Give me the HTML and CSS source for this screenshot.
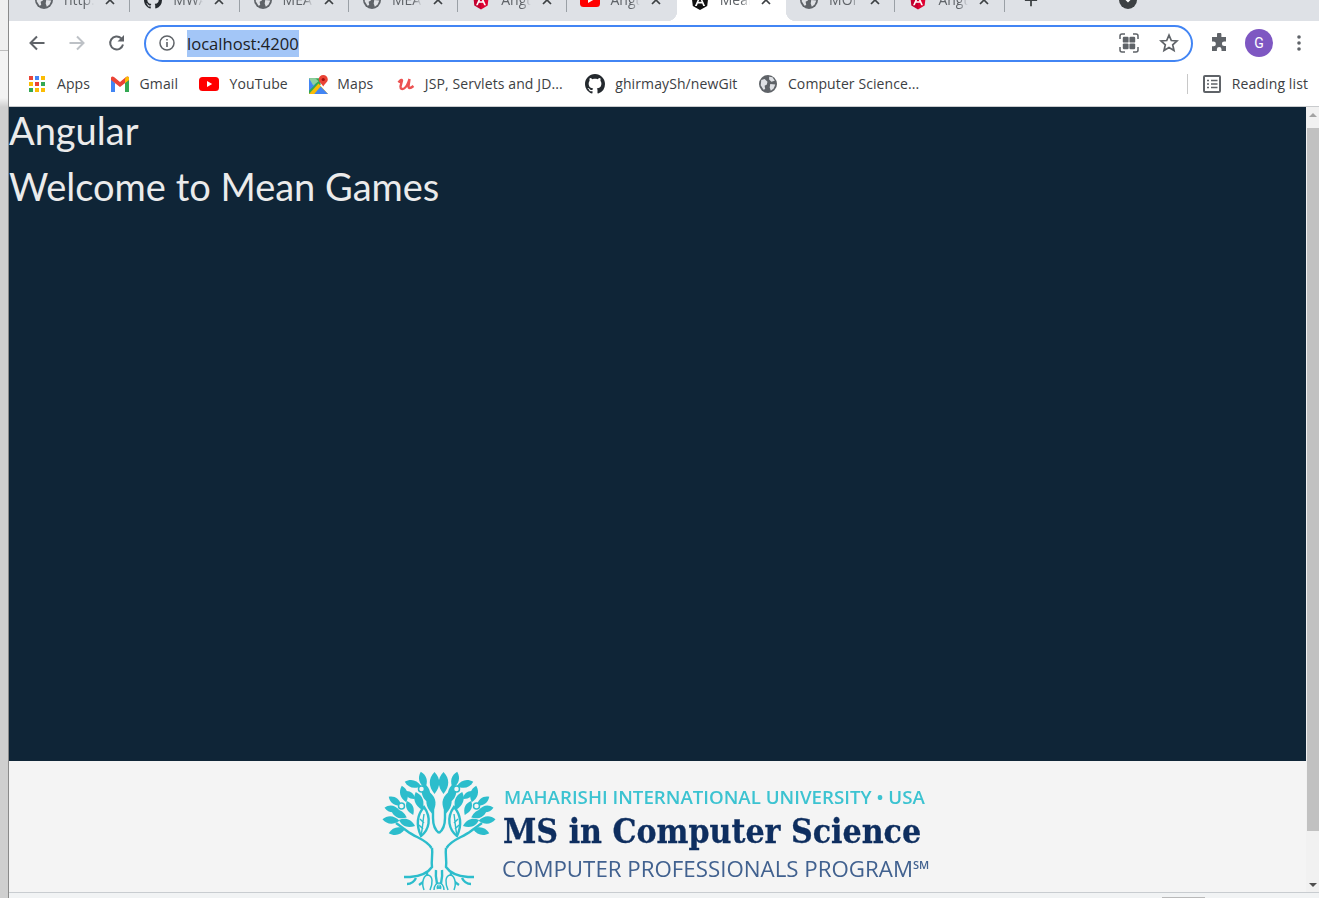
FILE: index.html
```html
<!DOCTYPE html>
<html lang="en">
<head>
<meta charset="utf-8">
<title>Mean Games</title>
<link rel="stylesheet" href="styles.css">
</head>
<body>
<svg class="defs" width="0" height="0" aria-hidden="true">
  <defs>
    <symbol id="globe" viewBox="0 0 16 16">
      <circle cx="8" cy="8" r="8" fill="#5f6368"/>
      <path d="M2 4.500 5 3.500 7.500 6 7 8.500 5 9.500 5.500 12.500 4 13 1.500 9ZM9 1.500 12 2 14 5 11 6 9 4ZM10 8 14.500 8.500 13 12 10.500 14 9.500 11Z" fill="#dfe1e5"/>
    </symbol>
    <symbol id="github" viewBox="0 0 16 16">
      <path fill="#24292e" d="M8 0C3.58 0 0 3.58 0 8c0 3.54 2.29 6.53 5.47 7.59.4.07.55-.17.55-.38 0-.19-.01-.82-.01-1.49-2.01.37-2.53-.49-2.69-.94-.09-.23-.48-.94-.82-1.13-.28-.15-.68-.52-.01-.53.63-.01 1.08.58 1.23.82.72 1.21 1.87.87 2.33.66.07-.52.28-.87.51-1.07-1.78-.2-3.64-.89-3.64-3.95 0-.87.31-1.59.82-2.15-.08-.2-.36-1.02.08-2.12 0 0 .67-.21 2.2.82.64-.18 1.32-.27 2-.27.68 0 1.36.09 2 .27 1.53-1.04 2.2-.82 2.2-.82.44 1.1.16 1.92.08 2.12.51.56.82 1.27.82 2.15 0 3.07-1.87 3.75-3.65 3.95.29.25.54.73.54 1.48 0 1.07-.01 1.93-.01 2.2 0 .21.15.46.55.38A8.013 8.013 0 0016 8c0-4.42-3.58-8-8-8z"/>
    </symbol>
    <symbol id="angular" viewBox="0 0 16 17">
      <path fill="#dd0031" d="M8 0 15.500 2.700 14.300 12.800 8 16.500Z"/>
      <path fill="#c3002f" d="M8 0 .5 2.700 1.700 12.800 8 16.500Z"/>
      <path fill="#fff" d="M8 2 3.300 12.500H5l1-2.400h4l1 2.400h1.700ZM8 5.800 9.400 8.800H6.600Z"/>
    </symbol>
    <symbol id="angular-dark" viewBox="0 0 18 18">
      <path fill="#111" d="M9 0 17.500 3 16.200 14 9 18 1.800 14 .5 3Z"/>
      <path fill="#fff" d="M9 2.500 3.900 14H5.800l1-2.600h4.400l1 2.600h1.900ZM9 6.500 10.600 9.800H7.400Z"/>
    </symbol>
    <symbol id="youtube" viewBox="0 0 20 14">
      <rect width="20" height="14" rx="3.500" fill="#f00"/>
      <path d="M8 4 13.200 7 8 10Z" fill="#fff"/>
    </symbol>
    <symbol id="close" viewBox="0 0 10 10">
      <path d="M1 1 9 9M9 1 1 9" stroke="#3c4043" stroke-width="1.700" fill="none"/>
    </symbol>
    <path id="lf" d="M0-9.500C5.500-4 5.500 3 0 9.500C-5.500 3-5.500-4 0-9.500Z"/>
  </defs>
</svg>

<div class="desktop">
  <div class="edge"></div>
  <div class="browser">

    <div class="tab-strip">
      <div class="tab-row">
        <div class="tab sep"><svg class="tab-icon"><use href="#globe"/></svg><span class="tab-title">http:</span><svg class="tab-close"><use href="#close"/></svg></div>
        <div class="tab sep"><svg class="tab-icon"><use href="#github"/></svg><span class="tab-title">MWA</span><svg class="tab-close"><use href="#close"/></svg></div>
        <div class="tab sep"><svg class="tab-icon"><use href="#globe"/></svg><span class="tab-title">MEA</span><svg class="tab-close"><use href="#close"/></svg></div>
        <div class="tab sep"><svg class="tab-icon"><use href="#globe"/></svg><span class="tab-title">MEA</span><svg class="tab-close"><use href="#close"/></svg></div>
        <div class="tab sep"><svg class="tab-icon angular-icon"><use href="#angular"/></svg><span class="tab-title">Angu</span><svg class="tab-close"><use href="#close"/></svg></div>
        <div class="tab"><svg class="tab-icon yt-icon"><use href="#youtube"/></svg><span class="tab-title">Angu</span><svg class="tab-close"><use href="#close"/></svg></div>
        <div class="tab active"><svg class="tab-icon angular-icon"><use href="#angular-dark"/></svg><span class="tab-title">Mean</span><svg class="tab-close"><use href="#close"/></svg></div>
        <div class="tab sep"><svg class="tab-icon"><use href="#globe"/></svg><span class="tab-title">MOI</span><svg class="tab-close"><use href="#close"/></svg></div>
        <div class="tab sep"><svg class="tab-icon angular-icon"><use href="#angular"/></svg><span class="tab-title">Angu</span><svg class="tab-close"><use href="#close"/></svg></div>
        <svg class="new-tab" viewBox="0 0 16 16"><path d="M8 1V15M1 8H15" stroke="#3c4043" stroke-width="2" fill="none"/></svg>
        <svg class="tab-search" viewBox="0 0 18 18"><circle cx="9" cy="9" r="9" fill="#3c4043"/><path d="M5 7.500 9 11.500 13 7.500Z" fill="#fff"/></svg>
      </div>
    </div>

    <div class="toolbar">
      <svg class="nav-icon" viewBox="0 0 20 20"><path d="M17.500 10H3.500M10 3.500 3.500 10 10 16.500" stroke="#5f6368" stroke-width="2" fill="none"/></svg>
      <svg class="nav-icon" viewBox="0 0 20 20"><path d="M2.500 10H16.500M10 3.500 16.500 10 10 16.500" stroke="#bdc1c6" stroke-width="2" fill="none"/></svg>
      <svg class="nav-icon" viewBox="0 0 20 20"><path d="M16 11.500A6.500 6.500 0 1 1 14.200 5.300" stroke="#5f6368" stroke-width="2" fill="none"/><path d="M17 2V8.500H10.500Z" fill="#5f6368"/></svg>
      <div class="omnibox">
        <svg class="info-icon" viewBox="0 0 16 16"><circle cx="8" cy="8" r="7" stroke="#5f6368" stroke-width="1.500" fill="none"/><path d="M8 7V12M8 4V5.600" stroke="#5f6368" stroke-width="1.600"/></svg>
        <span class="url">localhost:4200</span>
        <svg class="omni-icon qr-icon" viewBox="0 0 20 20"><path d="M1 6V3Q1 1 3 1H6M14 1H17Q19 1 19 3V6M19 14V17Q19 19 17 19H14M6 19H3Q1 19 1 17V14" stroke="#5f6368" stroke-width="1.500" fill="none"/><rect x="3.800" y="3.800" width="5.800" height="5.800" rx="1.200" fill="#5f6368"/><rect x="10.400" y="3.800" width="5.800" height="5.800" rx="1.200" fill="#5f6368"/><rect x="3.800" y="10.400" width="5.800" height="5.800" rx="1.200" fill="#5f6368"/><rect x="10.400" y="10.400" width="5.800" height="5.800" rx="1.200" fill="#5f6368"/></svg>
        <svg class="omni-icon" viewBox="0 0 20 20"><path d="M10 2.200 12.300 7.500 18 8 13.700 11.800 15 17.500 10 14.500 5 17.500 6.300 11.800 2 8 7.700 7.500Z" stroke="#5f6368" stroke-width="1.700" fill="none"/></svg>
      </div>
      <svg class="puzzle" viewBox="0 0 20 20"><path fill="#5f6368" d="M8 1.500a2.200 2.200 0 0 1 4.400 0V4H17v4.500h-1.800a2.300 2.300 0 0 0 0 4.600H17V18H12.500v-1.800a2.300 2.300 0 0 0-4.600 0V18H3v-4.700h1.500a2.400 2.400 0 0 0 0-4.800H3V4H8Z"/></svg>
      <div class="avatar">G</div>
      <svg class="menu" viewBox="0 0 4 16"><circle cx="2" cy="2" r="1.800" fill="#5f6368"/><circle cx="2" cy="8" r="1.800" fill="#5f6368"/><circle cx="2" cy="14" r="1.800" fill="#5f6368"/></svg>
    </div>

    <div class="bookmarks">
      <div class="bookmark">
        <svg class="bm-icon" viewBox="0 0 16 16"><g><rect x="0" y="0" width="4" height="4" fill="#ea4335"/><rect x="6" y="0" width="4" height="4" fill="#4285f4"/><rect x="12" y="0" width="4" height="4" fill="#fbbc04"/><rect x="0" y="6" width="4" height="4" fill="#fbbc04"/><rect x="6" y="6" width="4" height="4" fill="#ea4335"/><rect x="12" y="6" width="4" height="4" fill="#34a853"/><rect x="0" y="12" width="4" height="4" fill="#34a853"/><rect x="6" y="12" width="4" height="4" fill="#fbbc04"/><rect x="12" y="12" width="4" height="4" fill="#fbbc04"/></g></svg>
        <span>Apps</span>
      </div>
      <div class="bookmark">
        <svg class="bm-icon" viewBox="0 0 18 16"><path d="M0 3V16H4V7Z" fill="#4285f4"/><path d="M18 3V16H14V7Z" fill="#34a853"/><path d="M0 1.500Q1 0 3 1L9 6 15 1Q17 0 18 1.500V4L9 11 0 4Z" fill="#ea4335"/><path d="M14 3 15 1Q17 0 18 1.500V4L14 7Z" fill="#fbbc04"/></svg>
        <span>Gmail</span>
      </div>
      <div class="bookmark">
        <svg class="bm-icon bm-wide" viewBox="0 0 20 14"><use href="#youtube"/></svg>
        <span>YouTube</span>
      </div>
      <div class="bookmark">
        <svg class="bm-icon bm-maps" viewBox="0 0 18 18"><path d="M0 3 11 3 11 9 5 18H0Z" fill="#34a853"/><path d="M0 18 9 8 18 18Z" fill="#fbbc04"/><path d="M5 18 11 11 18 18Z" fill="#4285f4"/><path d="M0 3 6 9 0 15Z" fill="#4285f4"/><path d="M0 3H6L9 6 4 10Z" fill="#8fd0a0"/><path d="M13.500 0A4.300 4.300 0 0 1 17.800 4.300C17.800 7 14.500 8.500 13.500 11 12.500 8.500 9.200 7 9.200 4.300A4.300 4.300 0 0 1 13.500 0Z" fill="#ea4335"/><circle cx="13.500" cy="4.300" r="1.500" fill="#a50e0e"/></svg>
        <span>Maps</span>
      </div>
      <div class="bookmark">
        <svg class="bm-icon bm-u" viewBox="0 0 18 16"><path d="M1.500 6.500Q4.500 2.500 5 4.500L3.500 10.500Q3.500 14 7 12.500 10 11 12.500 3L11.500 10Q11.500 14 16.500 10" stroke="#ec5252" stroke-width="2.400" fill="none"/></svg>
        <span>JSP, Servlets and JD...</span>
      </div>
      <div class="bookmark">
        <svg class="bm-icon bm-gh"><use href="#github"/></svg>
        <span>ghirmaySh/newGit</span>
      </div>
      <div class="bookmark">
        <svg class="bm-icon bm-globe"><use href="#globe"/></svg>
        <span>Computer Science...</span>
      </div>
      <div class="bm-spacer"></div>
      <div class="bm-divider"></div>
      <div class="bookmark bm-reading">
        <svg class="bm-icon bm-list" viewBox="0 0 18 18"><rect x="1" y="1" width="16" height="16" rx="1" stroke="#5f6368" stroke-width="2" fill="none"/><path d="M4 5.500H6M8 5.500H14.500M4 9H6M8 9H14.500M4 12.500H6M8 12.500H14.500" stroke="#5f6368" stroke-width="1.500"/></svg>
        <span>Reading list</span>
      </div>
    </div>

    <div class="page">
      <div class="content">
        <main class="hero">
          <h1 class="heading">Angular</h1>
          <h1 class="heading">Welcome to Mean Games</h1>
        </main>
        <footer class="footer">
          <div class="logo">
            <svg class="tree" viewBox="0 0 120 122">
              <defs>
                <g id="half">
                  <g fill="#2cbdcc">
                    <use href="#lf" transform="translate(54.500 13) scale(1.150)"/>
                    <use href="#lf" transform="translate(46 23) rotate(-10)"/>
                    <use href="#lf" transform="translate(51 33) rotate(-5) scale(1.100)"/>
                    <use href="#lf" transform="translate(39 31) rotate(-20)"/>
                    <use href="#lf" transform="translate(33 14) rotate(-75) scale(.9)"/>
                    <use href="#lf" transform="translate(43 10) rotate(-15) scale(.9)"/>
                    <use href="#lf" transform="translate(30 25) rotate(-55) scale(.7)"/>
                    <use href="#lf" transform="translate(24 24) rotate(-15) scale(.9)"/>
                    <use href="#lf" transform="translate(15 31) rotate(-55) scale(.8)"/>
                    <use href="#lf" transform="translate(12 39) rotate(-80) scale(.8)"/>
                    <use href="#lf" transform="translate(11 50) rotate(-85) scale(.9)"/>
                    <use href="#lf" transform="translate(19 44) rotate(-65) scale(.9)"/>
                    <use href="#lf" transform="translate(17 61) rotate(-105) scale(.9)"/>
                    <use href="#lf" transform="translate(27 53) rotate(-70) scale(.9)"/>
                    <use href="#lf" transform="translate(30 38) rotate(-25) scale(.8)"/>
                  </g>
                  <g fill="none" stroke="#2cbdcc" stroke-width="2.400">
                    <path d="M44 37C37 45 36 55 41 66C49 60 52 48 44 37Z"/>
                    <path d="M44 44C43 50 43 56 41 66M40 49 44 53M39 55 43 59" stroke-width="1.400"/>
                    <path d="M59 63C55 60 53 55 53 48V38"/>
                    <path d="M51.500 78C46 69 36 68 27 61L16 53"/>
                    <path d="M52 78C53 85 51 90 52 97C48 103 42 106 30 107L24 107"/>
                    <path d="M47 102C48 108 44 112 39 115M36 108C34 112 30 114 27 114"/>
                    <path d="M56 100C55 108 57 112 58 119"/>
                  </g>
                  <g fill="#f4f4f4" stroke="#2cbdcc" stroke-width="1.500">
                    <circle cx="41.500" cy="19" r="3"/>
                    <circle cx="21.500" cy="36" r="3"/>
                    <path d="M44 120C41 112 44 105 48 105C53 106 53 113 50 120"/>
                    <path d="M54 120C54 115 57 113 59 113"/>
                  </g>
                </g>
              </defs>
              <use href="#half"/>
              <use href="#half" transform="translate(118) scale(-1 1)"/>
            </svg>
            <div class="logo-text">
              <div class="logo-top">MAHARISHI INTERNATIONAL UNIVERSITY • USA</div>
              <div class="logo-main">MS in Computer Science</div>
              <div class="logo-bottom">COMPUTER PROFESSIONALS PROGRAM<sup class="logo-sm">SM</sup></div>
            </div>
          </div>
        </footer>
      </div>
      <div class="scrollbar">
        <div class="arrow-up"></div>
        <div class="thumb"></div>
        <div class="track"></div>
        <div class="arrow-down"></div>
      </div>
    </div>

    <div class="status-bar"><div class="status-handle"></div></div>
  </div>
</div>
</body>
</html>
```
FILE: styles.css
```css
* { box-sizing: border-box; }
html, body { margin: 0; height: 100%; overflow: hidden; }
body { font-family: "Open Sans", "Noto Sans", sans-serif; color: #3c4043; }
.defs { position: absolute; }

.desktop { display: flex; width: 1319px; height: 898px; }
.edge {
  width: 9px; flex: none;
  border-right: 1px solid #8a8a8a;
  background: linear-gradient(#efefef 0, #efefef 50px, #bdbdbd 50px, #bdbdbd 51px, #f3f3f3 51px, #f3f3f3 98px, #cfcfcf 107px, #cfcfcf 100%);
}
.browser { flex: 1; min-width: 0; display: flex; flex-direction: column; }

/* tab strip, cropped at the top of the screenshot */
.tab-strip { height: 21px; flex: none; background: #dee1e6; overflow: hidden; }
.tab-row { display: flex; height: 42px; margin-top: -21px; padding-left: 12px; }
.tab { position: relative; flex: none; width: 109.3px; height: 42px; display: flex; align-items: center; padding: 0 14px; }
.sep::after { content: ""; position: absolute; right: 0; top: 21px; width: 1px; height: 12px; background: #9aa0a6; }
.active { background: #fff; }
.active::before, .active::after { content: ""; position: absolute; top: 32px; width: 10px; height: 10px; }
.active::before { left: -10px; background: radial-gradient(circle at 0 0, #dee1e6 10px, #fff 10.5px); }
.active::after { right: -10px; background: radial-gradient(circle at 100% 0, #dee1e6 10px, #fff 10.5px); }
.tab-icon { width: 18px; height: 18px; flex: none; }
.angular-icon { margin-top: 2px; }
.yt-icon { height: 14px; width: 20px; margin-top: -1px; margin-left: -1px; margin-right: -1px; }
.tab-title {
  width: 30px; margin-left: 11px; flex: none; overflow: hidden; white-space: nowrap;
  font-size: 14px; line-height: 18px; color: #5f6368;
  -webkit-mask-image: linear-gradient(90deg, #000 70%, transparent);
  mask-image: linear-gradient(90deg, #000 70%, transparent);
}
.tab-close { width: 10px; height: 10px; flex: none; margin-left: 11px; }
.new-tab { width: 14px; height: 14px; flex: none; margin: auto 0 auto 19px; }
.tab-search { width: 18px; height: 18px; flex: none; margin: auto 0 auto 81px; }

/* toolbar */
.toolbar { height: 44px; flex: none; background: #fff; display: flex; align-items: center; padding-left: 18px; }
.nav-icon { width: 20px; height: 20px; flex: none; margin-right: 20px; }
.toolbar .nav-icon:nth-child(3) { margin-right: 17px; }
.omnibox {
  width: 1049px; height: 37px; flex: none; border: 2px solid #4285f4; border-radius: 19px;
  display: flex; align-items: center; padding-left: 13px; margin-top: 1px;
}
.info-icon { width: 16px; height: 16px; flex: none; margin-top: -1px; }
.url { margin-left: 12px; background: #a3c6f7; color: #202124; font-size: 16.6px; line-height: 27px; }
.omni-icon { width: 20px; height: 20px; flex: none; margin-left: 20px; margin-top: -1px; }
.qr-icon { margin-left: auto; }
.omni-icon:last-child { margin-right: 12px; }
.puzzle { width: 20px; height: 20px; flex: none; margin-left: 16px; }
.avatar {
  width: 28px; height: 28px; flex: none; margin-left: 16px; border-radius: 50%; background: #7e57c2;
  color: #fff; font: 14px/28px Roboto, sans-serif; text-align: center;
}
.menu { width: 4px; height: 16px; flex: none; margin-left: 24px; }

/* bookmarks */
.bookmarks { height: 41px; flex: none; background: #fff; display: flex; align-items: center; gap: 20.5px; padding: 0 11px 3px 19px; font-size: 14px; letter-spacing: .1px; color: #3c4043; }
.bookmark { display: flex; align-items: center; gap: 11px; white-space: nowrap; line-height: 20px; }
.bm-icon { width: 18px; height: 16px; flex: none; }
.bm-wide { width: 20px; height: 14px; }
.bm-maps { width: 19px; height: 19px; margin: 0 -2px 0 1px; }
.bm-u { margin-left: 3px; margin-right: -1px; }
.bm-gh { width: 20px; height: 20px; margin-left: 2px; margin-right: -1px; }
.bm-globe { width: 18px; height: 18px; margin-left: 1px; }
.bm-spacer { flex: 1; }
.bm-divider { width: 1px; height: 20px; background: #c8c8c8; }
.bm-reading { margin-left: -6px; }
.bm-list { width: 18px; height: 18px; }

/* page */
.page { flex: 1; min-height: 0; display: flex; border-top: 1px solid #c9cbcd; }
.content { flex: 1; min-width: 0; display: flex; flex-direction: column; }
.hero { flex: 1; background: #0f2537; color: #ebebeb; padding-top: 1px; }
.heading { margin: 0 0 8px; font: 400 38px/48px Lato, sans-serif; }
.heading:first-child { margin-top: -2px; }
.footer { height: 131px; flex: none; background: #f4f4f4; overflow: hidden; padding-top: 9px; }
.logo { display: flex; padding-left: 371px; filter: blur(.35px); }
.tree { width: 120px; height: 122px; flex: none; }
.logo-text { margin-left: 3px; padding-top: 14px; display: flex; flex-direction: column; white-space: nowrap; }
.logo-top { font-size: 18.7px; font-weight: 600; line-height: 26px; margin-left: 1px; color: #3cc3d1; }
.logo-main { font: 700 33.5px/42px "DejaVu Serif Condensed", "DejaVu Serif", serif; color: #0e2e5f; margin-top: 1px; -webkit-text-stroke: .3px #0e2e5f; }
.logo-bottom { font-size: 22.3px; line-height: 30px; margin-top: 1px; margin-left: -1px; color: #41618f; }
.logo-sm { font-size: 11px; font-weight: 600; line-height: 0; vertical-align: 8px; }

/* scrollbar */
.scrollbar { width: 13px; flex: none; background: #f1f1f1; display: flex; flex-direction: column; padding-left: 1px; }
.arrow-up, .arrow-down { height: 21px; flex: none; position: relative; }
.arrow-up::after, .arrow-down::after { content: ""; position: absolute; left: 2px; border-left: 4px solid transparent; border-right: 4px solid transparent; }
.arrow-up::after { top: 6px; border-bottom: 4px solid #a3a3a3; }
.arrow-down::after { bottom: 5px; border-top: 4px solid #505050; }
.thumb { height: 703px; flex: none; background: #c1c1c1; }
.track { flex: 1; }

/* bottom strip */
.status-bar { height: 6px; flex: none; background: #f1f3f4; border-top: 1px solid #c8ccd0; display: flex; justify-content: flex-end; align-items: flex-end; padding-right: 114px; }
.status-handle { width: 43px; height: 1px; background: #b9b9b9; }
```
